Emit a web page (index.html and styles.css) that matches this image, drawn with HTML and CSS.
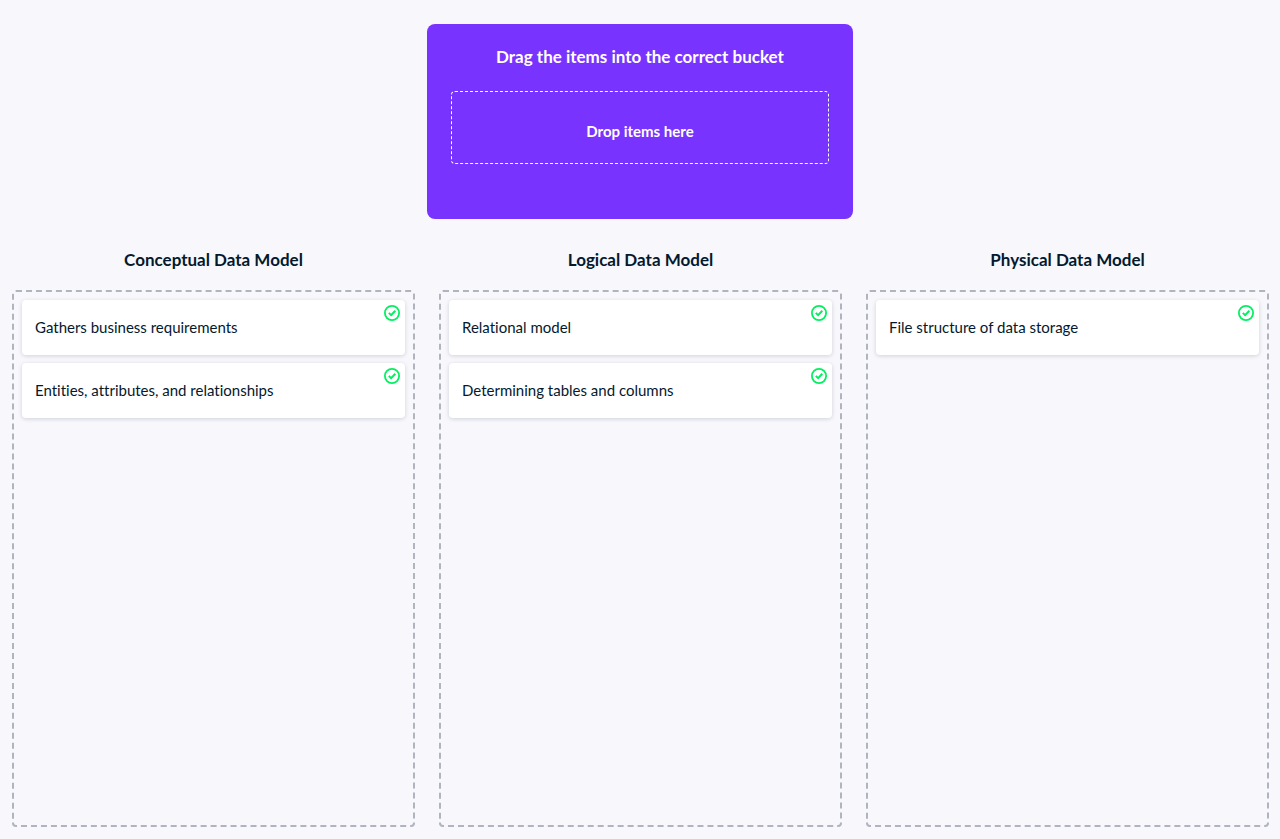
FILE: index.html
```html
<!DOCTYPE html>
<html lang="en">
<head>
<meta charset="utf-8">
<meta name="viewport" content="width=device-width, initial-scale=1">
<title>Drag the items into the correct bucket</title>
<link rel="stylesheet" href="styles.css">
</head>
<body>
<svg class="sprite" aria-hidden="true">
  <symbol id="check" viewBox="0 0 16 16">
    <circle cx="8" cy="8" r="7.1" fill="none" stroke="currentColor" stroke-width="1.8"/>
    <path d="M4.8 7.9 7.1 10.1 11.3 5.7" fill="none" stroke="currentColor" stroke-width="2"/>
  </symbol>
</svg>
<main class="exercise">
  <section class="source">
    <h1 class="source-title">Drag the items into the correct bucket</h1>
    <div class="drop-area">Drop items here</div>
  </section>
  <div class="buckets">
    <section class="bucket">
      <h2 class="bucket-title">Conceptual Data Model</h2>
      <ul class="bucket-list">
        <li class="card">Gathers business requirements<svg class="card-icon" role="img" aria-label="Correct"><use href="#check"/></svg></li>
        <li class="card">Entities, attributes, and relationships<svg class="card-icon" role="img" aria-label="Correct"><use href="#check"/></svg></li>
      </ul>
    </section>
    <section class="bucket">
      <h2 class="bucket-title">Logical Data Model</h2>
      <ul class="bucket-list">
        <li class="card">Relational model<svg class="card-icon" role="img" aria-label="Correct"><use href="#check"/></svg></li>
        <li class="card">Determining tables and columns<svg class="card-icon" role="img" aria-label="Correct"><use href="#check"/></svg></li>
      </ul>
    </section>
    <section class="bucket">
      <h2 class="bucket-title">Physical Data Model</h2>
      <ul class="bucket-list">
        <li class="card">File structure of data storage<svg class="card-icon" role="img" aria-label="Correct"><use href="#check"/></svg></li>
      </ul>
    </section>
  </div>
</main>
</body>
</html>
```
FILE: styles.css
```css
* {
  box-sizing: border-box;
}

body {
  margin: 0;
  background: #f7f7fc;
  color: #05192d;
  font: 15px/24px Lato, "Liberation Sans", sans-serif;
  font-variant-ligatures: none;
}

.sprite {
  position: absolute;
  width: 0;
  height: 0;
}

.exercise {
  display: flex;
  flex-direction: column;
  min-height: 100vh;
  padding: 24px 0 12px;
}

.source {
  width: calc((100% + 1px) / 3);
  margin: 0 auto;
  padding: 21px 24px 55px;
  border-radius: 8px;
  background: #7933ff;
  color: #fff;
  text-align: center;
}

.source-title,
.bucket-title {
  margin: 0;
  font-size: 17px;
  line-height: 24px;
  font-weight: 700;
  text-align: center;
}

.drop-area {
  margin-top: 22px;
  padding: 27px 12px 20px;
  border: 1px dashed #fff;
  border-radius: 4px;
  font-weight: 700;
}

.buckets {
  display: grid;
  grid-template-columns: repeat(3, minmax(0, 1fr));
  flex: 1;
  gap: 24px;
  padding: 29px 11px 0 12px;
}

.bucket {
  display: flex;
  flex-direction: column;
}

.bucket-list {
  display: flex;
  flex: 1;
  flex-direction: column;
  gap: 8px;
  margin: 18px 0 0;
  padding: 8px;
  border: 2px dashed #b0b4bf;
  border-radius: 4px;
  list-style: none;
}

.card {
  position: relative;
  padding: 15px 28px 16px 13px;
  border-radius: 4px;
  background: #fff;
  box-shadow: 0 1px 4px rgba(5, 25, 45, 0.16);
}

.card-icon {
  position: absolute;
  top: 5px;
  right: 5px;
  width: 16px;
  height: 16px;
  color: #03ef62;
}
```
